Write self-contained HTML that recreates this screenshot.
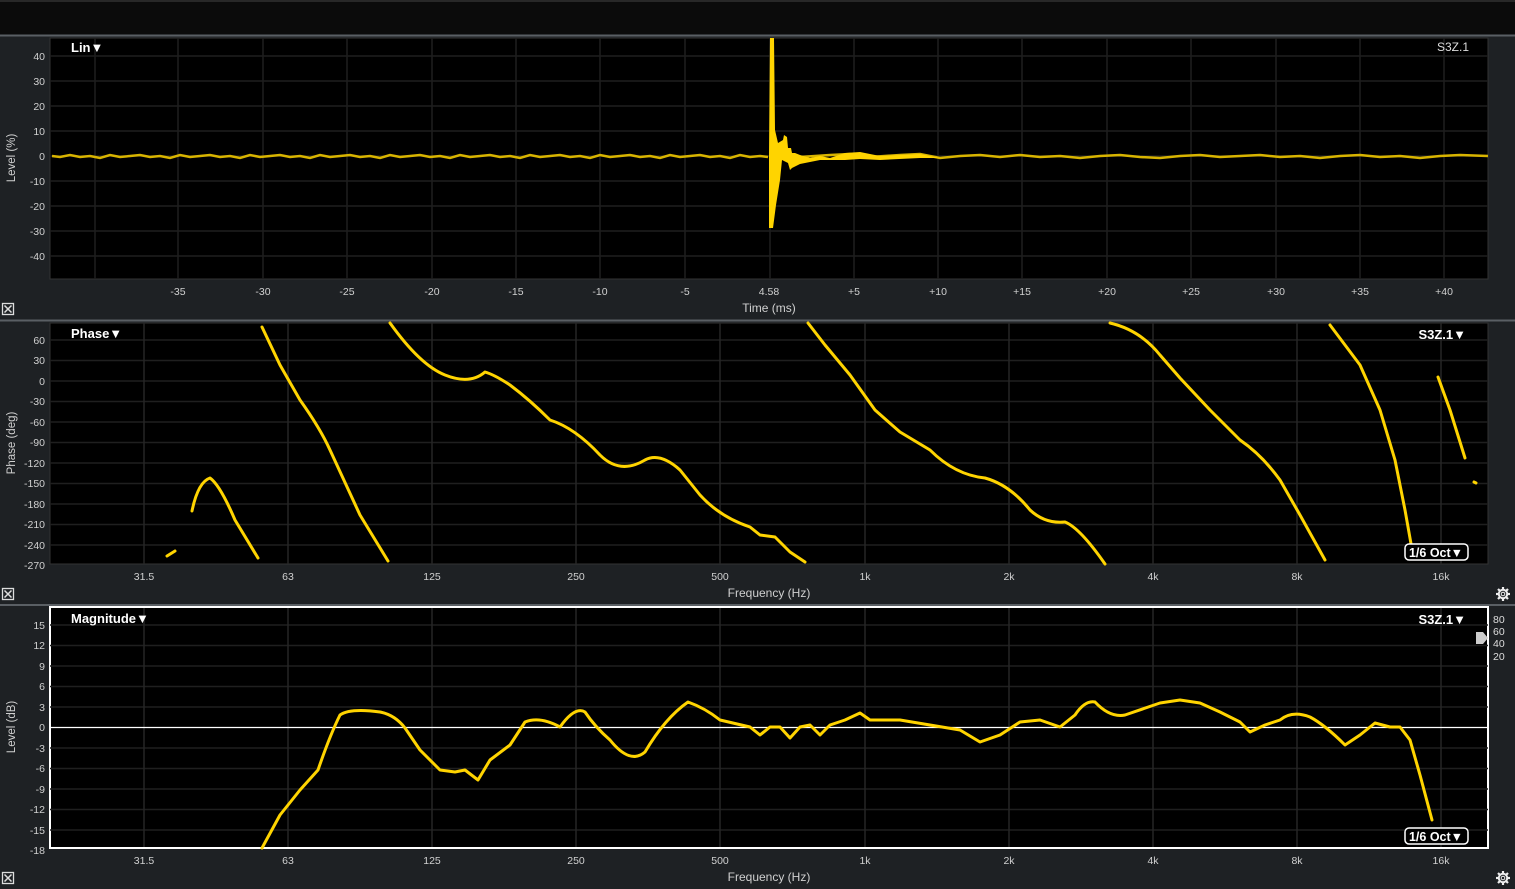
<!DOCTYPE html>
<html><head><meta charset="utf-8"><style>
body{margin:0;background:#1e2124;width:1515px;height:889px;overflow:hidden}
svg{display:block;font-family:"Liberation Sans",sans-serif;fill:#d0d0d0;font-size:10.5px}
.t{fill:#fff;font-weight:bold;font-size:13px}
.c{fill:none;stroke:#ffd400;stroke-width:3;stroke-linejoin:round;stroke-linecap:round}
</style></head><body>
<svg width="1515" height="889" xmlns="http://www.w3.org/2000/svg">
<defs>
<g id="xb"><rect x="0.5" y="0.5" width="11" height="11" fill="none" stroke="#ddd" stroke-width="1.3"/><path d="M2.5 2.5 L9.5 9.5 M9.5 2.5 L2.5 9.5" stroke="#ddd" stroke-width="1.5"/></g>
<g id="gear"><circle cx="0" cy="0" r="4.2" fill="none" stroke="#eee" stroke-width="2"/><circle cx="0" cy="0" r="1.6" fill="none" stroke="#eee" stroke-width="1"/><g stroke="#eee" stroke-width="2.2"><line x1="0" y1="-7" x2="0" y2="7"/><line x1="-7" y1="0" x2="7" y2="0"/><line x1="-5" y1="-5" x2="5" y2="5"/><line x1="-5" y1="5" x2="5" y2="-5"/></g><circle cx="0" cy="0" r="3.2" fill="#1e2124"/><circle cx="0" cy="0" r="1.8" fill="none" stroke="#eee" stroke-width="1"/></g>
</defs>
<rect width="1515" height="889" fill="#1e2124"/>
<rect x="0" y="0" width="1515" height="35" fill="#0b0b0b"/>
<line x1="0" y1="1" x2="1515" y2="1" stroke="#444"/>
<line x1="0" y1="35.5" x2="1515" y2="35.5" stroke="#5a5f64" stroke-width="2"/>
<line x1="0" y1="320.5" x2="1515" y2="320.5" stroke="#5a5f64" stroke-width="2"/>
<line x1="0" y1="605" x2="1515" y2="605" stroke="#5a5f64" stroke-width="2"/>

<!-- Panel 1 -->
<rect x="50" y="38" width="1438" height="241" fill="#000" stroke="#333"/>
<g stroke="#1f1f1f" stroke-width="1.5">
<line x1="50" y1="56" x2="1488" y2="56"/><line x1="50" y1="81" x2="1488" y2="81"/><line x1="50" y1="106" x2="1488" y2="106"/><line x1="50" y1="131" x2="1488" y2="131"/><line x1="50" y1="156" x2="1488" y2="156"/><line x1="50" y1="181" x2="1488" y2="181"/><line x1="50" y1="206" x2="1488" y2="206"/><line x1="50" y1="231" x2="1488" y2="231"/><line x1="50" y1="256" x2="1488" y2="256"/>
<line x1="95" y1="38" x2="95" y2="279"/><line x1="178" y1="38" x2="178" y2="279"/><line x1="263" y1="38" x2="263" y2="279"/><line x1="347" y1="38" x2="347" y2="279"/><line x1="432" y1="38" x2="432" y2="279"/><line x1="516" y1="38" x2="516" y2="279"/><line x1="600" y1="38" x2="600" y2="279"/><line x1="685" y1="38" x2="685" y2="279"/><line x1="770" y1="38" x2="770" y2="279"/><line x1="854" y1="38" x2="854" y2="279"/><line x1="938" y1="38" x2="938" y2="279"/><line x1="1022" y1="38" x2="1022" y2="279"/><line x1="1107" y1="38" x2="1107" y2="279"/><line x1="1191" y1="38" x2="1191" y2="279"/><line x1="1276" y1="38" x2="1276" y2="279"/><line x1="1360" y1="38" x2="1360" y2="279"/><line x1="1444" y1="38" x2="1444" y2="279"/>
</g>
<g text-anchor="end"><text x="45" y="60">40</text><text x="45" y="85">30</text><text x="45" y="110">20</text><text x="45" y="135">10</text><text x="45" y="160">0</text><text x="45" y="185">-10</text><text x="45" y="210">-20</text><text x="45" y="235">-30</text><text x="45" y="260">-40</text></g>
<g text-anchor="middle"><text x="178" y="295">-35</text><text x="263" y="295">-30</text><text x="347" y="295">-25</text><text x="432" y="295">-20</text><text x="516" y="295">-15</text><text x="600" y="295">-10</text><text x="685" y="295">-5</text><text x="769" y="295">4.58</text><text x="854" y="295">+5</text><text x="938" y="295">+10</text><text x="1022" y="295">+15</text><text x="1107" y="295">+20</text><text x="1191" y="295">+25</text><text x="1276" y="295">+30</text><text x="1360" y="295">+35</text><text x="1444" y="295">+40</text>
<text x="769" y="312" style="font-size:12px">Time (ms)</text></g>
<text transform="translate(15,158) rotate(-90)" text-anchor="middle" style="font-size:11.5px">Level (%)</text>
<text x="71" y="52" class="t">Lin▼</text>
<text x="1469" y="51" text-anchor="end" style="font-size:12px;fill:#ddd">S3Z.1</text>
<path d="M52 156 L60 157 L70 155 L80 157 L90 156 L100 158 L110 155 L120 157 L130 156 L140 155 L150 157 L160 156 L170 158 L180 155 L190 157 L200 156 L210 155 L220 157 L230 156 L240 158 L250 155 L260 157 L270 156 L280 155 L290 157 L300 156 L310 158 L320 155 L330 157 L340 156 L350 155 L360 157 L370 156 L380 158 L390 155 L400 157 L410 156 L420 155 L430 157 L440 156 L450 158 L460 155 L470 157 L480 156 L490 155 L500 157 L510 156 L520 158 L530 155 L540 157 L550 156 L560 155 L570 157 L580 156 L590 158 L600 155 L610 157 L620 156 L630 155 L640 157 L650 156 L660 158 L670 155 L680 157 L690 156 L700 155 L710 157 L720 156 L730 158 L740 155 L750 157 L760 156 L768 157" stroke="#d8b400" stroke-width="2.5" fill="none"/>
<path d="M800 157 L830 155 L850 154 L870 157 L900 155 L920 154 L940 158 L960 156 L980 155 L1000 157 L1020 155 L1040 157 L1060 156 L1080 158 L1100 156 L1120 155 L1140 157 L1160 158 L1180 156 L1200 155 L1220 157 L1240 156 L1260 155 L1280 157 L1300 156 L1320 158 L1340 156 L1360 155 L1380 157 L1400 156 L1420 158 L1440 156 L1460 155 L1488 156" stroke="#d8b400" stroke-width="2.5" fill="none"/>
<polygon points="769,156 770,38 774,38 775,130 778,143 783,140 784,135 787,137 788,148 791,148 792,153 795,153 800,155 810,158 820,156 830,158 845,153 860,152 880,156 900,155 920,154 940,158 920,158 880,160 860,159 845,160 820,160 800,164 792,168 790,170 788,163 782,160 780,180 776,205 773,228 769,228" fill="#ffd400"/>
<use href="#xb" x="2" y="303"/>

<!-- Panel 2 -->
<rect x="50" y="323" width="1438" height="241" fill="#000" stroke="#333"/>
<g stroke="#1f1f1f" stroke-width="1.5">
<line x1="50" y1="340" x2="1488" y2="340"/><line x1="50" y1="360.5" x2="1488" y2="360.5"/><line x1="50" y1="381" x2="1488" y2="381"/><line x1="50" y1="401.5" x2="1488" y2="401.5"/><line x1="50" y1="422" x2="1488" y2="422"/><line x1="50" y1="442.5" x2="1488" y2="442.5"/><line x1="50" y1="463" x2="1488" y2="463"/><line x1="50" y1="483.5" x2="1488" y2="483.5"/><line x1="50" y1="504" x2="1488" y2="504"/><line x1="50" y1="524.5" x2="1488" y2="524.5"/><line x1="50" y1="545" x2="1488" y2="545"/>
</g>
<g stroke="#262626" stroke-width="1.5">
<line x1="144" y1="323" x2="144" y2="564"/><line x1="288" y1="323" x2="288" y2="564"/><line x1="432" y1="323" x2="432" y2="564"/><line x1="576" y1="323" x2="576" y2="564"/><line x1="720" y1="323" x2="720" y2="564"/><line x1="865" y1="323" x2="865" y2="564"/><line x1="1009" y1="323" x2="1009" y2="564"/><line x1="1153" y1="323" x2="1153" y2="564"/><line x1="1297" y1="323" x2="1297" y2="564"/><line x1="1441" y1="323" x2="1441" y2="564"/>
</g>
<g text-anchor="end"><text x="45" y="344">60</text><text x="45" y="364">30</text><text x="45" y="385">0</text><text x="45" y="405">-30</text><text x="45" y="426">-60</text><text x="45" y="446">-90</text><text x="45" y="467">-120</text><text x="45" y="487">-150</text><text x="45" y="508">-180</text><text x="45" y="528">-210</text><text x="45" y="549">-240</text><text x="45" y="569">-270</text></g>
<g text-anchor="middle"><text x="144" y="580">31.5</text><text x="288" y="580">63</text><text x="432" y="580">125</text><text x="576" y="580">250</text><text x="720" y="580">500</text><text x="865" y="580">1k</text><text x="1009" y="580">2k</text><text x="1153" y="580">4k</text><text x="1297" y="580">8k</text><text x="1441" y="580">16k</text>
<text x="769" y="597" style="font-size:12px">Frequency (Hz)</text></g>
<text transform="translate(15,443) rotate(-90)" text-anchor="middle" style="font-size:11.5px">Phase (deg)</text>
<text x="71" y="338" class="t">Phase▼</text>
<text x="1466" y="339" text-anchor="end" class="t">S3Z.1▼</text>
<path class="c" d="M167 556 L175 551"/>
<path class="c" d="M192 511 Q198 482 210 478 Q220 485 235 520 L258 558"/>
<path class="c" d="M262 327 L280 365 L300 400 Q320 428 330 450 L360 515 L388 561"/>
<path class="c" d="M390 323 Q420 365 445 375 Q470 385 485 372 Q495 375 510 385 Q530 400 550 420 Q575 428 600 455 Q620 475 645 460 Q660 452 680 470 L700 495 Q720 517 750 527 L760 535 L775 537 L790 552 L805 562"/>
<path class="c" d="M808 323 L825 345 L850 375 L875 410 L900 432 L930 450 Q955 475 985 478 Q1010 485 1030 510 Q1045 524 1065 522 Q1080 528 1105 564"/>
<path class="c" d="M1110 323 Q1140 330 1160 355 L1180 378 L1210 410 L1240 440 Q1262 455 1280 480 L1300 515 L1325 560"/>
<path class="c" d="M1330 325 L1360 365 L1380 410 L1395 460 L1405 510 L1413 555"/>
<path class="c" d="M1438 377 L1450 410 L1465 458"/>
<path class="c" d="M1474 482 L1476 483"/>
<rect x="1405" y="544" width="63" height="16" rx="4" fill="#000" stroke="#fff" stroke-width="1.5"/>
<text x="1436" y="557" text-anchor="middle" class="t" style="font-size:12.5px">1/6 Oct▼</text>
<use href="#xb" x="2" y="588"/>
<use href="#gear" x="1503" y="594"/>

<!-- Panel 3 -->
<rect x="50" y="607" width="1438" height="241" fill="#000" stroke="#fff" stroke-width="2"/>
<g stroke="#1f1f1f" stroke-width="1.5">
<line x1="50" y1="625" x2="1488" y2="625"/><line x1="50" y1="645.5" x2="1488" y2="645.5"/><line x1="50" y1="666" x2="1488" y2="666"/><line x1="50" y1="686.5" x2="1488" y2="686.5"/><line x1="50" y1="707" x2="1488" y2="707"/><line x1="50" y1="748" x2="1488" y2="748"/><line x1="50" y1="768.5" x2="1488" y2="768.5"/><line x1="50" y1="789" x2="1488" y2="789"/><line x1="50" y1="809.5" x2="1488" y2="809.5"/><line x1="50" y1="830" x2="1488" y2="830"/>
</g>
<g stroke="#262626" stroke-width="1.5" transform="translate(0,285)">
<line x1="144" y1="323" x2="144" y2="562"/><line x1="288" y1="323" x2="288" y2="562"/><line x1="432" y1="323" x2="432" y2="562"/><line x1="576" y1="323" x2="576" y2="562"/><line x1="720" y1="323" x2="720" y2="562"/><line x1="865" y1="323" x2="865" y2="562"/><line x1="1009" y1="323" x2="1009" y2="562"/><line x1="1153" y1="323" x2="1153" y2="562"/><line x1="1297" y1="323" x2="1297" y2="562"/><line x1="1441" y1="323" x2="1441" y2="562"/>
</g>
<line x1="50" y1="727.5" x2="1488" y2="727.5" stroke="#fff" stroke-width="1.2"/>
<g text-anchor="end"><text x="45" y="629">15</text><text x="45" y="649">12</text><text x="45" y="670">9</text><text x="45" y="690">6</text><text x="45" y="711">3</text><text x="45" y="731">0</text><text x="45" y="752">-3</text><text x="45" y="772">-6</text><text x="45" y="793">-9</text><text x="45" y="813">-12</text><text x="45" y="834">-15</text><text x="45" y="854">-18</text></g>
<g text-anchor="middle"><text x="144" y="864">31.5</text><text x="288" y="864">63</text><text x="432" y="864">125</text><text x="576" y="864">250</text><text x="720" y="864">500</text><text x="865" y="864">1k</text><text x="1009" y="864">2k</text><text x="1153" y="864">4k</text><text x="1297" y="864">8k</text><text x="1441" y="864">16k</text>
<text x="769" y="881" style="font-size:12px">Frequency (Hz)</text></g>
<text transform="translate(15,727) rotate(-90)" text-anchor="middle" style="font-size:11.5px">Level (dB)</text>
<text x="71" y="623" class="t">Magnitude▼</text>
<text x="1466" y="624" text-anchor="end" class="t">S3Z.1▼</text>
<g style="font-size:10.5px;fill:#ddd"><text x="1493" y="623">80</text><text x="1493" y="635">60</text><text x="1493" y="647">40</text><text x="1493" y="660">20</text></g>
<polygon points="1476,632 1483,632 1488,638 1483,644 1476,644" fill="#ccc"/>
<path class="c" d="M262 848 L280 815 L300 790 L318 770 Q330 735 340 715 Q350 708 380 712 Q395 715 405 728 L420 750 L440 770 L455 772 L465 770 L478 780 L490 760 L510 745 L525 722 Q540 716 560 727 Q575 706 585 712 Q595 727 610 740 Q630 765 645 752 Q665 718 688 702 Q705 708 720 720 L750 727 L760 735 L770 727 L780 727 L790 738 L800 727 L810 725 L820 735 L830 725 L845 720 L860 713 L870 720 L900 720 L930 725 L960 730 L980 742 L1000 735 L1020 722 L1040 720 L1060 727 L1075 715 Q1085 700 1095 702 Q1110 718 1125 715 L1160 703 L1180 700 L1200 703 L1220 712 L1240 722 L1250 732 L1265 725 L1280 720 Q1292 710 1310 717 Q1325 725 1345 745 L1360 735 L1375 723 L1390 727 L1400 727 L1410 740 L1420 775 L1432 820"/>
<rect x="1405" y="828" width="63" height="16" rx="4" fill="#000" stroke="#fff" stroke-width="1.5"/>
<text x="1436" y="841" text-anchor="middle" class="t" style="font-size:12.5px">1/6 Oct▼</text>
<use href="#xb" x="2" y="872"/>
<use href="#gear" x="1503" y="878"/>
</svg>
</body></html>
